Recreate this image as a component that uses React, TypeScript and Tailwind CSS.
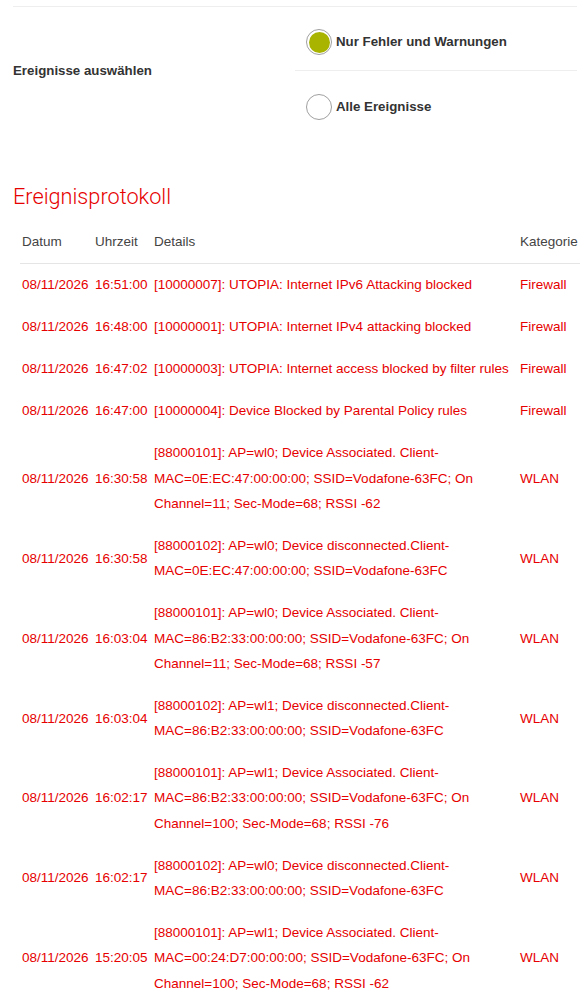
import React, { useState } from "react";

interface LogEntry {
  date: string;
  time: string;
  details: string;
  category: string;
}

const entries: LogEntry[] = [
  { date: "08/11/2026", time: "16:51:00", details: "[10000007]: UTOPIA: Internet IPv6 Attacking blocked", category: "Firewall" },
  { date: "08/11/2026", time: "16:48:00", details: "[10000001]: UTOPIA: Internet IPv4 attacking blocked", category: "Firewall" },
  { date: "08/11/2026", time: "16:47:02", details: "[10000003]: UTOPIA: Internet access blocked by filter rules", category: "Firewall" },
  { date: "08/11/2026", time: "16:47:00", details: "[10000004]: Device Blocked by Parental Policy rules", category: "Firewall" },
  { date: "08/11/2026", time: "16:30:58", details: "[88000101]: AP=wl0; Device Associated. Client-MAC=0E:EC:47:00:00:00; SSID=Vodafone-63FC; On Channel=11; Sec-Mode=68; RSSI -62", category: "WLAN" },
  { date: "08/11/2026", time: "16:30:58", details: "[88000102]: AP=wl0; Device disconnected.Client-MAC=0E:EC:47:00:00:00; SSID=Vodafone-63FC", category: "WLAN" },
  { date: "08/11/2026", time: "16:03:04", details: "[88000101]: AP=wl0; Device Associated. Client-MAC=86:B2:33:00:00:00; SSID=Vodafone-63FC; On Channel=11; Sec-Mode=68; RSSI -57", category: "WLAN" },
  { date: "08/11/2026", time: "16:03:04", details: "[88000102]: AP=wl1; Device disconnected.Client-MAC=86:B2:33:00:00:00; SSID=Vodafone-63FC", category: "WLAN" },
  { date: "08/11/2026", time: "16:02:17", details: "[88000101]: AP=wl1; Device Associated. Client-MAC=86:B2:33:00:00:00; SSID=Vodafone-63FC; On Channel=100; Sec-Mode=68; RSSI -76", category: "WLAN" },
  { date: "08/11/2026", time: "16:02:17", details: "[88000102]: AP=wl0; Device disconnected.Client-MAC=86:B2:33:00:00:00; SSID=Vodafone-63FC", category: "WLAN" },
  { date: "08/11/2026", time: "15:20:05", details: "[88000101]: AP=wl1; Device Associated. Client-MAC=00:24:D7:00:00:00; SSID=Vodafone-63FC; On Channel=100; Sec-Mode=68; RSSI -62", category: "WLAN" },
];

const Radio: React.FC<{ checked: boolean }> = ({ checked }) => (
  <span className="flex h-[26px] w-[26px] shrink-0 items-center justify-center rounded-full border border-[#a0a0a0] bg-white">
    {checked && <span className="h-[21px] w-[21px] rounded-full bg-[#a8b400]" />}
  </span>
);

const cell = "px-[2px] py-[8.33px] align-middle leading-[25.33px]";

const App: React.FC = () => {
  const [filter, setFilter] = useState<"errors" | "all">("errors");

  return (
    <div className="min-h-[999px] overflow-hidden bg-white font-['Liberation_Sans',Arial,sans-serif] text-[13.5px] text-[#333]">
      <div className="pl-[13px] pr-[3px] pt-[6px]">
        <div className="flex border-t border-[#eeeeee]">
          <div className="flex w-[282px] items-center text-[13.3px] font-bold">Ereignisse auswählen</div>
          <div className="flex-1 text-[13.3px] font-bold">
            <label
              className="flex cursor-pointer items-center gap-[4px] border-b border-[#eeeeee] pl-[11px] pt-[22px] pb-[15px]"
              onClick={() => setFilter("errors")}
            >
              <Radio checked={filter === "errors"} />
              Nur Fehler und Warnungen
            </label>
            <label
              className="flex cursor-pointer items-center gap-[4px] pl-[11px] pt-[23px] pb-[15px]"
              onClick={() => setFilter("all")}
            >
              <Radio checked={filter === "all"} />
              Alle Ereignisse
            </label>
          </div>
        </div>

        <h2 className="mt-[47px] h-[30px] font-['Roboto',sans-serif] text-[21.7px] font-light leading-[30px] text-[#e60000]">
          Ereignisprotokoll
        </h2>
      </div>

      <div className="ml-[20px] mt-[9px] overflow-hidden">
        <table className="w-[588px] table-fixed border-collapse text-left">
          <colgroup>
            <col className="w-[73px]" />
            <col className="w-[59px]" />
            <col className="w-[366px]" />
            <col className="w-[90px]" />
          </colgroup>
          <thead>
            <tr className="border-b border-[#e5e5e5] text-[#444]">
              <th className={`${cell} font-normal`}>Datum</th>
              <th className={`${cell} font-normal`}>Uhrzeit</th>
              <th className={`${cell} font-normal`}>Details</th>
              <th className={`${cell} font-normal`}>Kategorie</th>
            </tr>
          </thead>
          <tbody className="text-[#e60000]">
            {entries.map((e, i) => (
              <tr key={i}>
                <td className={`${cell} whitespace-nowrap`}>{e.date}</td>
                <td className={`${cell} whitespace-nowrap`}>{e.time}</td>
                <td className={cell}>{e.details}</td>
                <td className={cell}>{e.category}</td>
              </tr>
            ))}
          </tbody>
        </table>
      </div>
    </div>
  );
};

export default App;
